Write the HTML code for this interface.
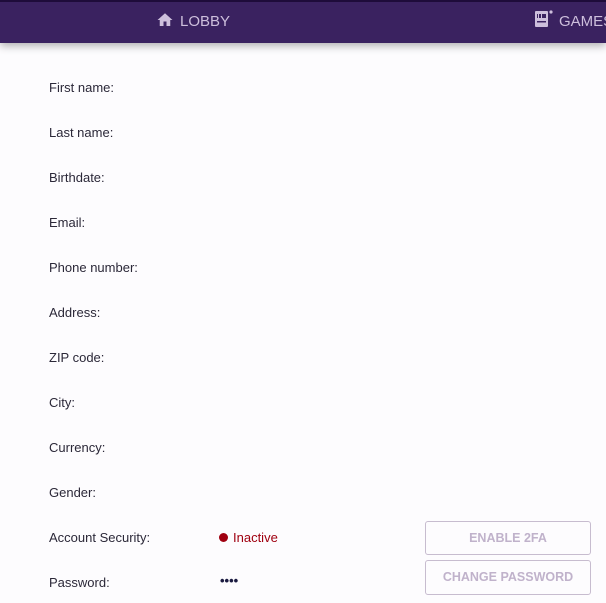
<!DOCTYPE html>
<html><head><style>
body{margin:0;width:606px;height:603px;background:#fdfcfe;font-family:"Liberation Sans",sans-serif;overflow:hidden;position:relative}
.nav{position:absolute;left:0;top:0;width:606px;height:43px;background:#3a2260;border-top:2px solid #1e0c3a;box-sizing:border-box;box-shadow:0 3px 8px rgba(0,0,0,.3)}
.nav span{position:absolute;top:11px;color:#cdbfdc;font-size:15px}
.lbl{position:absolute;left:49px;font-size:13px;color:#2b2838}
.btn{position:absolute;left:425px;width:166px;border:1px solid #c7bccf;border-radius:3px;color:#c0b2cb;font-weight:bold;font-size:12.5px;text-align:center;box-sizing:border-box}
</style></head><body>
<div class="nav">
<svg style="position:absolute;left:156px;top:9px" width="18" height="18" viewBox="0 0 24 24"><path d="M10 20v-6h4v6h5v-8h3L12 3 2 12h3v8z" fill="#cdbfdc"/></svg>
<span style="left:180px">LOBBY</span>
<svg style="position:absolute;left:534px;top:7px" width="20" height="20" viewBox="0 0 20 20"><rect x="1" y="2" width="13" height="16" rx="1" fill="#cdbfdc"/><rect x="3" y="5" width="9" height="4" fill="#3a2260"/><rect x="4" y="5" width="1" height="4" fill="#cdbfdc"/><rect x="7" y="5" width="1" height="4" fill="#cdbfdc"/><rect x="3" y="12" width="9" height="1.5" fill="#3a2260"/><circle cx="17" cy="3" r="1.6" fill="#cdbfdc"/></svg>
<span style="left:559px">GAMES</span>
</div>
<div class="lbl" style="top:80px">First name:</div>
<div class="lbl" style="top:125px">Last name:</div>
<div class="lbl" style="top:170px">Birthdate:</div>
<div class="lbl" style="top:215px">Email:</div>
<div class="lbl" style="top:260px">Phone number:</div>
<div class="lbl" style="top:305px">Address:</div>
<div class="lbl" style="top:350px">ZIP code:</div>
<div class="lbl" style="top:395px">City:</div>
<div class="lbl" style="top:440px">Currency:</div>
<div class="lbl" style="top:485px">Gender:</div>
<div class="lbl" style="top:530px">Account Security:</div>
<div class="lbl" style="top:575px">Password:</div>
<div style="position:absolute;left:219px;top:533px;width:9px;height:9px;border-radius:50%;background:#a00010"></div>
<div style="position:absolute;left:233px;top:530px;font-size:13px;color:#a00010">Inactive</div>
<div style="position:absolute;left:220px;top:573px;font-size:13px;color:#1a1a40;font-weight:bold">••••</div>
<div class="btn" style="top:521px;height:34px;line-height:32px">ENABLE 2FA</div>
<div class="btn" style="top:560px;height:35px;line-height:33px">CHANGE PASSWORD</div>
</body></html>
